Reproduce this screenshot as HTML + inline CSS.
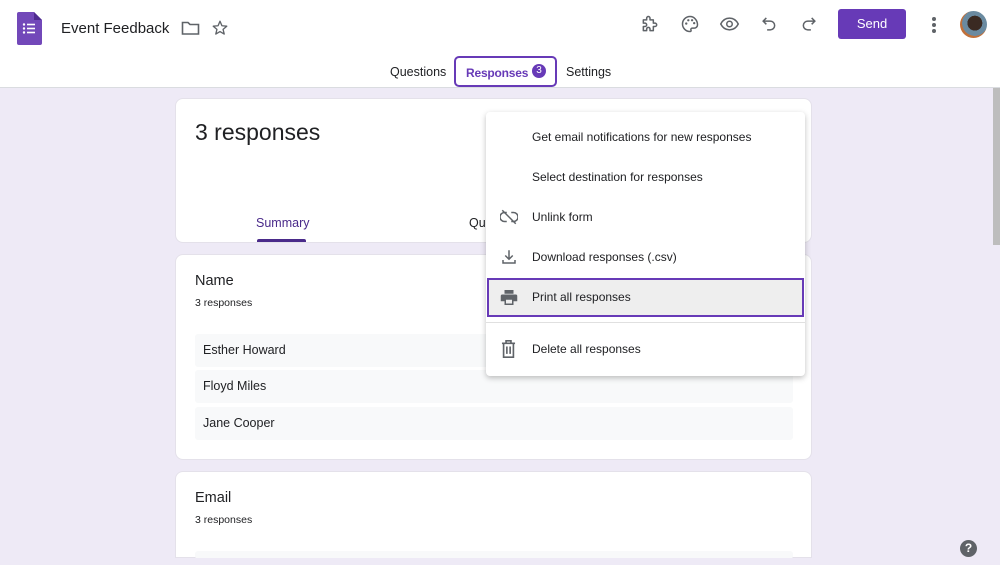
<!DOCTYPE html>
<html><head><style>
*{margin:0;padding:0;box-sizing:border-box}
body{width:1000px;height:565px;overflow:hidden;background:#eeeaf6;font-family:"Liberation Sans",Arial,sans-serif;color:#202124;position:relative}
.hdr{position:absolute;left:0;top:0;width:1000px;height:88px;background:#fff;border-bottom:1px solid #dadce0}
.abs{position:absolute}
.card{position:absolute;left:175px;width:637px;background:#fff;border-radius:8px;border:1px solid #e4e1ea}
.row{position:absolute;left:19px;width:598px;height:33px;background:#f8f9fa;border-radius:3px;font-size:12.5px;line-height:33px;padding-left:8px}
.menu{position:absolute;left:486px;top:112px;width:319px;height:264px;background:#fff;border-radius:4px;box-shadow:0 2px 6px rgba(0,0,0,.25)}
.mi{position:absolute;left:46px;font-size:12px;color:#202124}
.ic{position:absolute;left:14px}
</style></head><body>
<div class="hdr">
 <svg class="abs" style="left:17px;top:12px" width="25" height="33" viewBox="0 0 25 33"><path d="M2 0h15l8 8v23a2 2 0 0 1-2 2H2a2 2 0 0 1-2-2V2a2 2 0 0 1 2-2z" fill="#7248b9"/><path d="M17 0v8h8z" fill="#4f2b8f"/><g fill="#fff"><circle cx="7" cy="12.5" r="1.2"/><circle cx="7" cy="16.5" r="1.2"/><circle cx="7" cy="20.5" r="1.2"/><rect x="10" y="11.7" width="8" height="1.6"/><rect x="10" y="15.7" width="8" height="1.6"/><rect x="10" y="19.7" width="8" height="1.6"/></g></svg>
 <div class="abs" style="left:61px;top:20px;font-size:15px;color:#202124">Event Feedback</div>
 <svg class="abs" style="left:181px;top:20px" width="19" height="16" viewBox="0 0 19 16"><path d="M1.5 2.5h5.5l2 2h8.5v9.5h-16z" fill="none" stroke="#5f6368" stroke-width="1.6"/></svg>
 <svg class="abs" style="left:211px;top:19px" width="18" height="18" viewBox="0 0 24 24"><path d="M12 3l2.6 6 6.4.6-4.9 4.2 1.5 6.3L12 16.8 6.4 20.1l1.5-6.3L3 9.6l6.4-.6z" fill="none" stroke="#5f6368" stroke-width="1.8" stroke-linejoin="round"/></svg>
 <svg class="abs" style="left:640px;top:14px" width="20" height="20" viewBox="0 0 24 24"><path d="M4 7h4V5a2 2 0 0 1 4 0v2h4v4h2a2 2 0 0 1 0 4h-2v5h-4v-2a2 2 0 0 0-4 0v2H4v-5h2a2 2 0 0 0 0-4H4z" fill="none" stroke="#5f6368" stroke-width="1.8" stroke-linejoin="round"/></svg>
 <svg class="abs" style="left:680px;top:14px" width="20" height="20" viewBox="0 0 24 24"><path d="M12 3a9 9 0 0 0 0 18c1.2 0 1.6-.8 1.2-1.6-.6-1.2.2-2.4 1.5-2.4H17a4 4 0 0 0 4-4c0-5.5-4-10-9-10z" fill="none" stroke="#5f6368" stroke-width="1.8"/><g fill="#5f6368"><circle cx="7.5" cy="11.5" r="1.4"/><circle cx="10" cy="7.5" r="1.4"/><circle cx="14.5" cy="7.5" r="1.4"/><circle cx="17" cy="11" r="1.4"/></g></svg>
 <svg class="abs" style="left:719px;top:14px" width="21" height="20" viewBox="0 0 24 24"><path d="M1.5 12C4 7 8 5 12 5s8 2 10.5 7C20 17 16 19 12 19s-8-2-10.5-7z" fill="none" stroke="#5f6368" stroke-width="1.8"/><circle cx="12" cy="12" r="3.3" fill="none" stroke="#5f6368" stroke-width="1.8"/></svg>
 <svg class="abs" style="left:760px;top:14px" width="19" height="19" viewBox="0 0 24 24"><path d="M8 5L4 9l4 4M4 9h9a5.5 5.5 0 0 1 0 11H9" fill="none" stroke="#5f6368" stroke-width="1.9"/></svg>
 <svg class="abs" style="left:799px;top:14px" width="19" height="19" viewBox="0 0 24 24"><path d="M16 5l4 4-4 4M20 9h-9a5.5 5.5 0 0 0 0 11h4" fill="none" stroke="#5f6368" stroke-width="1.9"/></svg>
 <div class="abs" style="left:838px;top:9px;width:68px;height:30px;background:#673ab7;border-radius:3px;color:#fff;font-size:13px;text-align:center;line-height:30px">Send</div>
 <div class="abs" style="left:932px;top:17px;width:4px;height:4px;border-radius:2px;background:#5f6368;box-shadow:0 6px 0 #5f6368,0 12px 0 #5f6368"></div>
 <div class="abs" style="left:960px;top:11px;width:27px;height:27px;border-radius:50%;background:radial-gradient(circle at 55% 45%,#3a2a22 0 35%,#6a8aa0 36% 60%,#c0703a 61%)"></div>
 <div class="abs" style="left:390px;top:65px;font-size:12.5px;color:#202124">Questions</div>
 <div class="abs" style="left:454px;top:56px;width:103px;height:31px;border:2.5px solid #673ab7;border-radius:5px"></div>
 <div class="abs" style="left:466px;top:66px;font-size:12px;color:#673ab7;font-weight:bold;letter-spacing:-0.2px">Responses</div>
 <div class="abs" style="left:532px;top:64px;width:14px;height:14px;border-radius:50%;background:#673ab7;color:#fff;font-size:10px;text-align:center;line-height:14px">3</div>
 <div class="abs" style="left:566px;top:65px;font-size:12.5px;color:#202124">Settings</div>
</div>
<div class="abs" style="left:993px;top:88px;width:7px;height:157px;background:#bdbdbd"></div>
<div class="card" style="top:98px;height:145px">
 <div class="abs" style="left:19px;top:20px;font-size:23px">3 responses</div>
 <div class="abs" style="left:80px;top:117px;font-size:12.5px;color:#4a2a8a">Summary</div>
 <div class="abs" style="left:81px;top:140px;width:49px;height:3px;background:#4a2a8a;border-radius:2px 2px 0 0"></div>
 <div class="abs" style="left:293px;top:117px;font-size:12.5px">Qu</div>
</div>
<div class="card" style="top:254px;height:206px">
 <div class="abs" style="left:19px;top:18px;font-size:14.5px">Name</div>
 <div class="abs" style="left:19px;top:42px;font-size:10.5px">3 responses</div>
 <div class="row" style="top:79px">Esther Howard</div>
 <div class="row" style="top:115px">Floyd Miles</div>
 <div class="row" style="top:152px">Jane Cooper</div>
</div>
<div class="card" style="top:471px;height:87px;border-radius:8px 8px 0 0">
 <div class="abs" style="left:19px;top:18px;font-size:14.5px">Email</div>
 <div class="abs" style="left:19px;top:42px;font-size:10.5px">3 responses</div>
 <div class="row" style="top:79px;height:8px"></div>
</div>
<div class="abs" style="left:0;top:558px;width:1000px;height:7px;background:#eeeaf6"></div>
<div class="abs" style="left:960px;top:540px;width:17px;height:17px;border-radius:50%;background:#5f6368;color:#fff;font-size:12px;font-weight:bold;text-align:center;line-height:17px">?</div>
<div class="menu">
 <div class="mi" style="top:18px">Get email notifications for new responses</div>
 <div class="mi" style="top:58px">Select destination for responses</div>
 <svg class="ic" style="top:97px" width="18" height="16" viewBox="0 0 24 20"><path d="M9 4H6a6 6 0 0 0 0 12h3M15 4h3a6 6 0 0 1 0 12h-3M3 1l18 18" fill="none" stroke="#5f6368" stroke-width="2"/></svg>
 <div class="mi" style="top:98px">Unlink form</div>
 <svg class="ic" style="top:136px" width="18" height="18" viewBox="0 0 24 24"><path d="M12 3v12M7 10l5 5 5-5M4 16v4h16v-4" fill="none" stroke="#5f6368" stroke-width="2"/></svg>
 <div class="mi" style="top:138px">Download responses (.csv)</div>
 <div class="abs" style="left:1px;top:166px;width:317px;height:39px;background:#eeeeee;border:2.5px solid #673ab7"></div>
 <svg class="ic" style="top:177px" width="18" height="17" viewBox="0 0 24 22"><path d="M6 1h12v5H6z" fill="#5f6368"/><path d="M3 7h18a2 2 0 0 1 2 2v7h-5v5H6v-5H1V9a2 2 0 0 1 2-2z" fill="#5f6368"/><rect x="8" y="14" width="8" height="5" fill="#eee"/></svg>
 <div class="mi" style="top:178px">Print all responses</div>
 <div class="abs" style="left:0;top:210px;width:319px;height:1px;background:#e0e0e0"></div>
 <svg class="ic" style="top:228px" width="17" height="18" viewBox="0 0 20 22"><path d="M2 4h16M7 4V1h6v3M4 4v17h12V4M8 8v9M12 8v9" fill="none" stroke="#5f6368" stroke-width="2"/></svg>
 <div class="mi" style="top:230px">Delete all responses</div>
</div>
</body></html>
